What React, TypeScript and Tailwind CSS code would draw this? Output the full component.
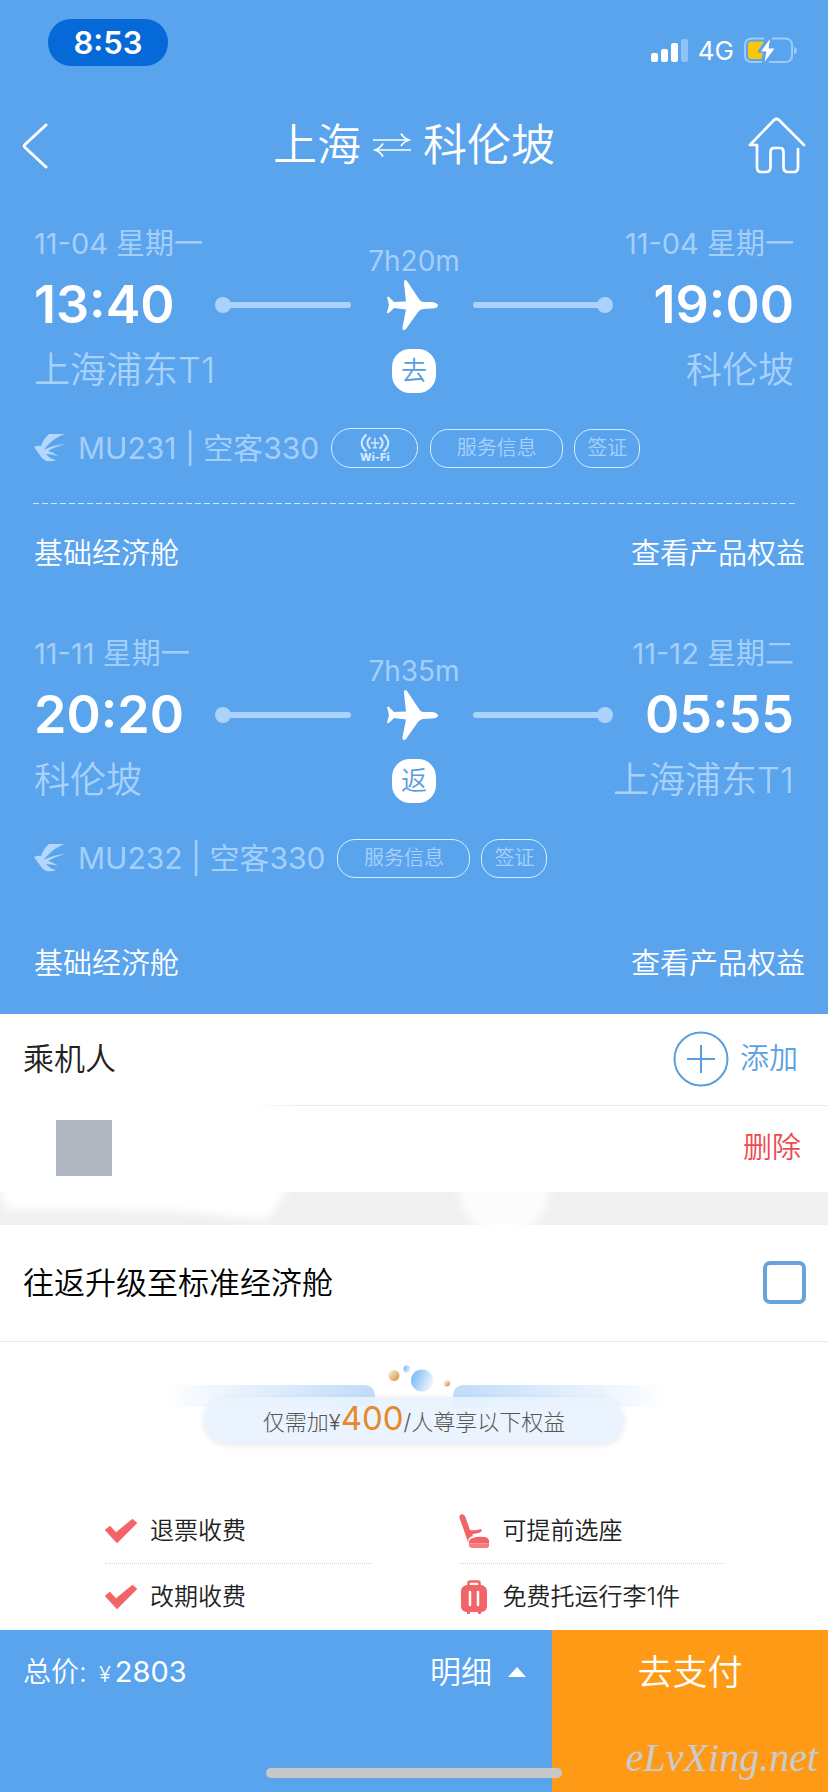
import React from "react";

type Stop = { date: string; time: string; place: string };
type Leg = {
  from: Stop;
  to: Stop;
  duration: string;
  direction: string;
  flight: string;
  wifi: boolean;
};

const legs: Leg[] = [
  {
    from: { date: "11-04 星期一", time: "13:40", place: "上海浦东T1" },
    to: { date: "11-04 星期一", time: "19:00", place: "科伦坡" },
    duration: "7h20m",
    direction: "去",
    flight: "MU231 | 空客330",
    wifi: true,
  },
  {
    from: { date: "11-11 星期一", time: "20:20", place: "科伦坡" },
    to: { date: "11-12 星期二", time: "05:55", place: "上海浦东T1" },
    duration: "7h35m",
    direction: "返",
    flight: "MU232 | 空客330",
    wifi: false,
  },
];

function StatusBar() {
  return (
    <div className="flex h-[100px] items-start justify-between pl-12 pr-[31px]">
      <div className="mt-[19px] flex h-[47px] w-[120px] items-center justify-center rounded-[23px] bg-[#0669d8] pb-px text-[31px] font-semibold leading-none">
        8:53
      </div>
      <div className="mt-[37px] flex h-[28px] items-center gap-[9px]">
        <svg className="h-[28px] w-[38px]" viewBox="0 0 38 28" aria-hidden="true">
          <rect x="0" y="16" width="7" height="9" rx="2" fill="#fff" />
          <rect x="10" y="12" width="7" height="13" rx="2" fill="#fff" />
          <rect x="20" y="6" width="7" height="19" rx="2" fill="#fff" />
          <rect x="30" y="2" width="7" height="23" rx="2" fill="#8ec3fa" />
        </svg>
        <span className="text-[26px] leading-none">4G</span>
        <svg className="h-[28px] w-[54px]" viewBox="0 0 54 28" aria-hidden="true">
          <path d="M21 1.500H9Q2 1.500 2 8.500V18Q2 25 9 25H19M29 1.500H42Q49 1.500 49 8.500V18Q49 25 42 25H26" fill="none" stroke="#9ccbfa" strokeWidth="2" />
          <path d="M51 9.500Q54 11 54 13.500T51 17.500Z" fill="#9ccbfa" />
          <path d="M8 4.500H21L15 14Q14.500 16 17 16H20L18.500 22H8Q5 22 5 19V7.500Q5 4.500 8 4.500Z" fill="#fbc70c" />
          <path d="M27 2L18 14.500H23.500L21.500 25L31.500 11.500H25.500Z" fill="#fff" />
        </svg>
      </div>
    </div>
  );
}

function Header() {
  return (
    <header className="flex h-[92px] items-center justify-between pl-[22px] pr-[22px]">
      <button type="button" aria-label="返回" className="flex w-[58px]">
        <svg className="h-[48px] w-[28px]" viewBox="0 0 28 48" fill="none" stroke="#fff" strokeWidth="3" strokeLinecap="round" strokeLinejoin="round" aria-hidden="true">
          <path d="M24 3L3 22.500Q1.500 24 3 25.500L24 45" />
        </svg>
      </button>
      <h1 className="flex items-center gap-3 pb-[2px] text-[44px] font-[350] leading-none">
        上海
        <svg className="h-[26px] w-[38px]" viewBox="0 0 38 26" fill="none" stroke="#fff" strokeWidth="1.700" aria-hidden="true">
          <path d="M0 8H35M28 1.500Q31 6.500 36 8Q31 9.500 28 14M38 18H3M10 11.500Q7 16.500 2 18Q7 19.500 10 24.500" />
        </svg>
        科伦坡
      </h1>
      <button type="button" aria-label="首页" className="flex w-[58px]">
        <svg className="h-[58px] w-[58px]" viewBox="0 0 58 58" fill="none" stroke="#fff" strokeWidth="2.700" strokeLinecap="round" strokeLinejoin="round" aria-hidden="true">
          <path d="M56 28L31 3Q28.500 1 26 3L2 28H9V50Q9 55 13 55H18Q22.500 55 22.500 50V35Q22.500 31 26 31H32Q35.500 31 35.500 35V50Q35.500 55 40 55H46Q50 55 50 50V32" />
        </svg>
      </button>
    </header>
  );
}

function StopColumn({ stop, end }: { stop: Stop; end?: boolean }) {
  return (
    <div className={end ? "flex flex-col items-end" : "flex flex-col items-start"}>
      <span className="text-[29px] leading-[40px] text-[#a3cffa]">{stop.date}</span>
      <span className="mt-[11px] text-[52px] font-semibold leading-[60px]">{stop.time}</span>
      <span className="mt-[11px] text-[36px] font-[350] leading-[48px] text-[#a8d1fb]">{stop.place}</span>
    </div>
  );
}

function Track({ end }: { end?: boolean }) {
  return (
    <div className={end ? "flex w-[140px] flex-row-reverse items-center" : "flex w-[136px] items-center"}>
      <span className="size-4 rounded-full bg-[#abd2fb]" />
      <span className={end ? "-mr-1 h-[6px] flex-1 rounded-full bg-[#abd2fb]" : "-ml-1 h-[6px] flex-1 rounded-full bg-[#abd2fb]"} />
    </div>
  );
}

function LegBlock({ leg }: { leg: Leg }) {
  return (
    <section className="h-[410px]">
      <div className="relative flex justify-between px-[34px] pt-8">
        <StopColumn stop={leg.from} />
        <div className="absolute inset-x-0 top-[49px] flex flex-col items-center">
          <span className="text-[28px] leading-[40px] text-[#a3cffa]">{leg.duration}</span>
          <div className="flex h-[48px] items-center gap-[35px]">
            <Track />
            <svg className="h-[52px] w-[52px]" viewBox="0 0 52 52" aria-hidden="true">
              <path d="M1 18Q3 17 4 19L8 23L20 22.500L18 4Q18 -1 21 2L33 20Q34 22.500 37 23L46 23Q52 24 52 26.500T46 29.500L37 30Q34 30.500 32 33L20 50Q16 53 16.500 48L20 30.500L8 29L4 33Q2 35 1 33.500L3 26Z" fill="#fff" />
            </svg>
            <Track end />
          </div>
          <span className="mt-5 flex size-11 items-center justify-center rounded-[18px] bg-white text-[26px] font-[350] leading-none text-[#5a9bdd]">
            {leg.direction}
          </span>
        </div>
        <StopColumn stop={leg.to} end />
      </div>
      <div className="mt-[34px] flex h-10 items-center px-[34px]">
        <svg className="mr-3 h-[28px] w-[32px] shrink-0" viewBox="0 0 32 28" aria-hidden="true">
          <path d="M31 0Q21 3 12 13L10 16Q18 11 32 10Q20 13 14 17Q19 18 24 22Q18 20 12 20Q16 25 22 26Q18 28 12 27Q7 24 5 20L0 13Q4 11 7 12Q10 4 15 0Z" fill="#b4d8fd" />
        </svg>
        <span className="mr-3 text-[30px] leading-10 text-[#a3cffa]">{leg.flight}</span>
        {leg.wifi && (
          <span className="mr-3 flex h-10 w-[87px] flex-col items-center justify-center rounded-full border border-[#d4efff] text-[#d4e9fd]">
            <svg className="h-[18px] w-[30px]" viewBox="0 0 30 19" fill="none" stroke="#d4e9fd" strokeWidth="2.200" aria-hidden="true">
              <path d="M6 0.500Q-4 9.500 6 18.500M10 3.500Q4 9.500 10 15.500M24 0.500Q34 9.500 24 18.500M20 3.500Q26 9.500 20 15.500" />
              <path d="M15 4V15M10.500 9.500H19.500M13 14.500H17" strokeWidth="1.500" />
            </svg>
            <span className="text-[11px] font-extrabold leading-[11px]">Wi-Fi</span>
          </span>
        )}
        <button type="button" className="mr-[11px] h-[39px] w-[133px] rounded-[18px] border border-[#d4efff] text-[20px] font-[350] leading-none text-[#a8d1fb]">
          服务信息
        </button>
        <button type="button" className="h-[39px] w-[66px] rounded-[18px] border border-[#d4efff] text-[20px] font-[350] leading-none text-[#a8d1fb]">
          签证
        </button>
      </div>
      <div className="mx-[33px] mt-[35px] h-px">
        {leg.wifi && (
          <svg className="block h-px w-full" aria-hidden="true">
            <line x1="0" y1="0.500" x2="100%" y2="0.500" stroke="#c5e6fb" strokeDasharray="6 3" />
          </svg>
        )}
      </div>
      <div className="mt-[30px] flex items-center justify-between pl-[34px] pr-[23px] text-[29px] font-[350] leading-10">
        <span>基础经济舱</span>
        <button type="button">查看产品权益</button>
      </div>
    </section>
  );
}

function Passengers() {
  return (
    <section>
      <div className="flex h-[91px] items-center justify-between pb-[2px] pl-[23px] pr-[30px]">
        <h2 className="text-[31px] font-[350] leading-none text-[#222]">乘机人</h2>
        <button type="button" className="flex items-center gap-[11px] text-[29px] font-[350] leading-none text-[#5aa1e3]">
          <svg className="h-[56px] w-[56px]" viewBox="0 0 56 56" fill="none" stroke="#5a9fdb" strokeWidth="2" aria-hidden="true">
            <circle cx="28" cy="28" r="26.500" />
            <path d="M28 14V42M14 28H42" />
          </svg>
          添加
        </button>
      </div>
      <div className="ml-[250px] h-px bg-linear-to-r from-white via-[#e8e8e8] via-10% to-[#e8e8e8]" />
      <div className="flex h-[86px] items-center justify-between pb-[3px] pl-[56px] pr-[27px]">
        <span className="size-14 bg-[#b0b7c0]" />
        <button type="button" className="text-[29px] font-[350] leading-none text-[#f0484e]">删除</button>
      </div>
      <svg className="block h-[33px] w-full bg-[#f0f0f0]" viewBox="0 0 828 33" preserveAspectRatio="none" aria-hidden="true">
        <defs>
          <filter id="soft" x="-10%" y="-50%" width="120%" height="200%">
            <feGaussianBlur stdDeviation="4" />
          </filter>
        </defs>
        <path d="M-4 -20H292Q280 24 262 27Q240 26 200 21Q120 16 6 18Z" fill="#fff" filter="url(#soft)" />
        <ellipse cx="504" cy="2" rx="45" ry="40" fill="#fcfcfc" filter="url(#soft)" />
      </svg>
    </section>
  );
}

function UpgradeBanner() {
  return (
    <div className="flex flex-col items-center pt-[18px]">
      <svg className="h-[47px] w-[510px]" viewBox="0 0 510 47" aria-hidden="true">
        <defs>
          <linearGradient id="barL"><stop offset="0" stopColor="#fff" /><stop offset="1" stopColor="#bfdcfa" /></linearGradient>
          <linearGradient id="barR"><stop offset="0" stopColor="#bfdcfa" /><stop offset="1" stopColor="#fff" /></linearGradient>
          <linearGradient id="ball" x1="0" y1="0.300" x2="1" y2="0.700"><stop offset="0" stopColor="#7ab8f5" /><stop offset="1" stopColor="#f2f8ff" /></linearGradient>
          <linearGradient id="orb" x1="0" y1="0" x2="1" y2="1"><stop offset="0.200" stopColor="#f3dfc8" /><stop offset="1" stopColor="#d98a30" /></linearGradient>
        </defs>
        <path d="M3 25H204Q216 25 216 37V47H3Z" fill="url(#barL)" />
        <path d="M510 25H306Q294 25 294 37V47H510Z" fill="url(#barR)" />
        <circle cx="235" cy="15.500" r="5.500" fill="url(#orb)" />
        <circle cx="248" cy="9" r="3.500" fill="url(#ball)" />
        <circle cx="263" cy="20.500" r="11" fill="url(#ball)" />
        <circle cx="288" cy="23.500" r="3" fill="url(#orb)" />
      </svg>
      <div className="relative -mt-[10px] flex h-[46px] w-[420px] items-center justify-center rounded-full bg-[#e9f3fe]/90 pb-1 shadow-[0_2px_6px_rgba(0,0,0,0.1)]">
        <p className="flex items-baseline text-[22px] font-light leading-none text-[#555]">
          仅需加¥<strong className="text-[33px] font-normal leading-none text-[#e58a2c]">400</strong>/人尊享以下权益
        </p>
      </div>
    </div>
  );
}

function CheckMark() {
  return (
    <svg className="h-[24px] w-[32px]" viewBox="0 0 32 24" aria-hidden="true">
      <path d="M0 11L5 7L11 13.500L27.500 0L32 4L12 24Z" fill="#f26468" stroke="#f26468" strokeWidth="0.500" strokeLinejoin="round" />
    </svg>
  );
}

function SeatMark() {
  return (
    <svg className="h-[34px] w-[31px]" viewBox="0 0 31 34" aria-hidden="true">
      <path d="M1 1Q4 -1 6 2L11 16Q17 17 22 15Q24 17 21 18.500L13 20.500L14 22Q9 23 9 28L2 8Q-0.500 3 1 1Z" fill="#f26468" />
      <path d="M10 29.500Q9 25 14 24Q18 22 26 23Q31 24 30 29.500Z" fill="#f26468" />
      <path d="M10 29.500H30V32.500Q29 34 27 34H13Q10 34 10 31Z" fill="#f47f82" />
    </svg>
  );
}

function BagMark() {
  return (
    <svg className="h-[34px] w-[31px]" viewBox="0 0 31 34" aria-hidden="true">
      <path d="M9.500 6V3Q9.500 1.500 11 1.500H19Q20.500 1.500 20.500 3V6" fill="none" stroke="#f26468" strokeWidth="2.500" />
      <path d="M7 5H23Q28 7 28 11V26Q28 31 23 32H7Q2 31 2 26V11Q2 7 7 5Z" fill="#f26468" />
      <path d="M8 32H11V34H8ZM19 32H22V34H19Z" fill="#f26468" />
      <path d="M11 12V25M19 12V25" stroke="#fff" strokeWidth="2.500" strokeLinecap="round" />
    </svg>
  );
}

const benefits = [
  { icon: <CheckMark />, label: "退票收费" },
  { icon: <SeatMark />, label: "可提前选座" },
  { icon: <CheckMark />, label: "改期收费" },
  { icon: <BagMark />, label: "免费托运行李1件" },
];

function Upgrade() {
  return (
    <section className="grow bg-white">
      <label className="flex h-[117px] items-center justify-between border-b border-[#e8e8e8] pb-[2px] pl-[23px] pr-[22px] text-[31px] font-[350] leading-none text-black">
        往返升级至标准经济舱
        <input type="checkbox" className="size-[43px] appearance-none rounded-[7px] border-4 border-[#69a3dc] bg-white" />
      </label>
      <UpgradeBanner />
      <ul className="grid grid-cols-2 gap-x-[88px] pl-[105px] pr-[104px] pt-[55px] text-[24px] font-[350] leading-none text-[#222]">
        {benefits.map((b, i) => (
          <li key={b.label} className={i < 2 ? "flex h-[66px] items-center gap-[13px] border-b border-dotted border-[#ccd4de]" : "flex h-[66px] items-center gap-[13px]"}>
            {b.icon}
            <span className="whitespace-nowrap">{b.label}</span>
          </li>
        ))}
      </ul>
    </section>
  );
}

function PayBar() {
  return (
    <footer className="relative flex h-[164px] font-[350] text-white">
      <div className="flex w-2/3 items-start justify-between bg-[#5aa4ee] pl-[23px] pr-[26px] pt-[22px]">
        <p className="flex items-baseline text-[28px] leading-10">
          总价:<span className="ml-3 mr-1 text-[22px]">¥</span>
          <span className="text-[29px] font-normal">2803</span>
        </p>
        <button type="button" className="flex items-center gap-4 text-[31px] leading-10">
          明细
          <svg className="h-[10px] w-[18px]" viewBox="0 0 18 10" fill="#fff" aria-hidden="true">
            <path d="M9 0L18 10H0Z" />
          </svg>
        </button>
      </div>
      <button type="button" className="flex w-1/3 items-start justify-center bg-[#ff9a17] pt-[22px] text-[35px] leading-10">
        去支付
      </button>
      <div className="absolute bottom-4 left-1/2 h-[10px] w-[296px] -translate-x-1/2 rounded-full bg-[#c8c8c8]" />
      <span className="absolute bottom-4 right-[10px] font-['Liberation_Serif',serif] text-[40px] italic leading-10 text-[#c9cbcf]">
        eLvXing.net
      </span>
    </footer>
  );
}

export default function App() {
  return (
    <div className="flex min-h-screen flex-col bg-white font-['Inter','Noto_Sans_CJK_SC',sans-serif]">
      <div className="bg-[#5aa4ee] pb-[2px] text-white">
        <StatusBar />
        <Header />
        {legs.map((leg) => (
          <LegBlock key={leg.flight} leg={leg} />
        ))}
      </div>
      <Passengers />
      <Upgrade />
      <PayBar />
    </div>
  );
}
